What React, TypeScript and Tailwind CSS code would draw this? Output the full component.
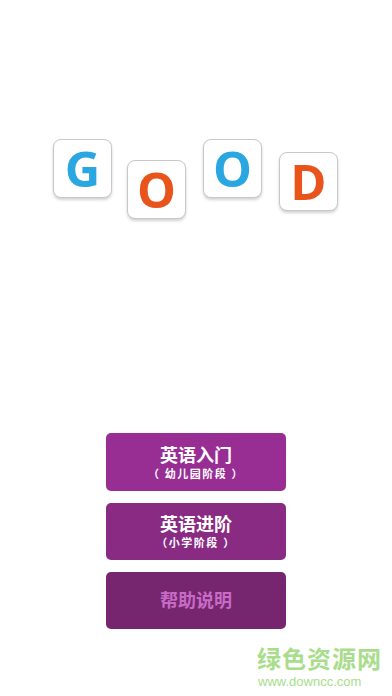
import React from 'react';

const tiles = [
  { ch: 'G', color: 'text-[#2aa7e0]', cls: 'mt-0' },
  { ch: 'O', color: 'text-[#e8541c]', cls: 'mt-[21px] ml-[15px]' },
  { ch: 'O', color: 'text-[#2aa7e0]', cls: 'mt-0 ml-[17px]' },
  { ch: 'D', color: 'text-[#e8541c]', cls: 'mt-[13px] ml-[17px]' },
];

export default function App() {
  return (
    <div className="relative w-[392px] h-[696px] bg-white overflow-hidden font-['Noto_Sans','Noto_Sans_CJK_SC',sans-serif]">
      <div className="flex items-start pt-[139px] pl-[53px]">
        {tiles.map((t, i) => (
          <div
            key={i}
            className={`${t.cls} w-[59px] h-[59px] rounded-[8px] bg-white border border-[#c8c8c8] shadow-[0_2px_3px_rgba(0,0,0,0.18)] flex items-center justify-center`}
          >
            <span className={`${t.color} text-[49px] font-bold leading-none font-['Open_Sans',sans-serif]`}>{t.ch}</span>
          </div>
        ))}
      </div>

      <div className="flex flex-col items-center gap-[12px] mt-[214px]">
        <button className="w-[180px] h-[58px] rounded-[5px] bg-[#982e94] flex flex-col items-center justify-center text-white">
          <span className="text-[18px] font-bold leading-[23px]">英语入门</span>
          <span className="text-[11px] font-bold leading-[14px] tracking-[1.5px]">（ 幼儿园阶段 ）</span>
        </button>
        <button className="w-[180px] h-[57px] rounded-[5px] bg-[#892a83] flex flex-col items-center justify-center text-white">
          <span className="text-[18px] font-bold leading-[23px]">英语进阶</span>
          <span className="text-[11px] font-bold leading-[14px] tracking-[1.5px]">（小学阶段 ）</span>
        </button>
        <button className="w-[180px] h-[57px] rounded-[5px] bg-[#76266f] flex items-center justify-center text-[#c86bc5]">
          <span className="text-[18px] font-bold">帮助说明</span>
        </button>
      </div>

      <div className="absolute left-[257px] top-[644px] flex flex-col items-start">
        <span className="text-[24px] font-bold leading-[30px] text-[#a9dd8c] tracking-[1px]">绿色资源网</span>
        <span className="text-[13px] leading-[15px] text-[#a9dd8c] font-['Liberation_Sans',sans-serif] ml-[1px]">www.downcc.com</span>
      </div>
    </div>
  );
}
